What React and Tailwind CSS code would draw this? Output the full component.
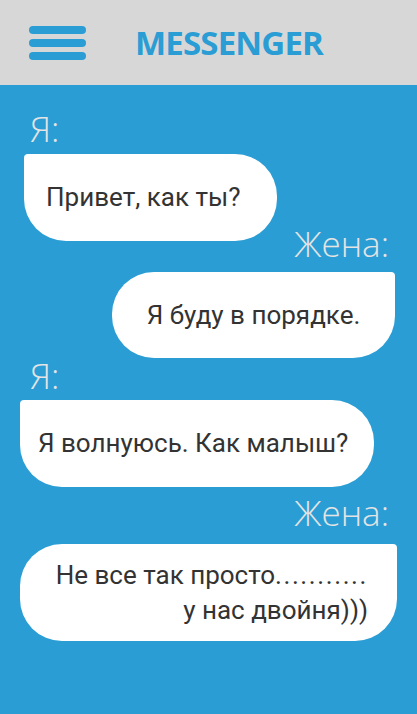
import React from "react";

const Label = ({ children, right, className }) => (
  <div
    className={`text-[35px] leading-[34px] font-light text-[#e4e4e4] ${right ? "text-right pr-[28px]" : "pl-[30px]"} ${className}`}
  >
    {children}
  </div>
);

export default function App() {
  return (
    <div className="w-[417px] h-[714px] overflow-hidden bg-[#2a9dd5] font-['Open_Sans',sans-serif]">
      {/* Top bar */}
      <header className="h-[85px] bg-[#d7d7d7] flex items-center">
        <div className="ml-[29px] w-[57px] flex flex-col gap-[5px]">
          <span className="h-[8px] rounded-full bg-[#2a9dd5]" />
          <span className="h-[8px] rounded-full bg-[#2a9dd5]" />
          <span className="h-[8px] rounded-full bg-[#2a9dd5]" />
        </div>
        <h1 className="ml-[49px] text-[33px] font-bold tracking-tight text-[#2a9dd5]">MESSENGER</h1>
      </header>

      {/* Chat */}
      <main className="pt-[27px] text-[#333] [&_p]:font-['Roboto',sans-serif] [&_p]:text-[26px]">
        <Label>Я:</Label>
        <div className="mt-[8px] ml-[24px] w-[253px] h-[87px] bg-white rounded-[42px] rounded-tl-[4px] flex items-center pl-[22px]">
          <p>Привет, как ты?</p>
        </div>

        <Label right className="mt-[-14px]">Жена:</Label>
        <div className="mt-[11px] ml-[112px] w-[283px] h-[86px] bg-white rounded-[42px] rounded-tr-[4px] flex items-center justify-center">
          <p>Я буду в порядке.</p>
        </div>

        <Label className="mt-[1px]">Я:</Label>
        <div className="mt-[7px] ml-[20px] w-[354px] h-[87px] bg-white rounded-[42px] rounded-tl-[4px] flex items-center pl-[18px]">
          <p>Я волнуюсь. Как малыш?</p>
        </div>

        <Label right className="mt-[9px]">Жена:</Label>
        <div className="mt-[14px] ml-[20px] w-[377px] h-[97px] bg-white rounded-[42px] rounded-tr-[4px] flex flex-col justify-center items-end pr-[29px] text-right">
          <p className="leading-[35px]">
            Не все так просто<span className="tracking-[1.6px]">...........</span>
          </p>
          <p className="leading-[35px]">у нас двойня)))</p>
        </div>
      </main>
    </div>
  );
}
